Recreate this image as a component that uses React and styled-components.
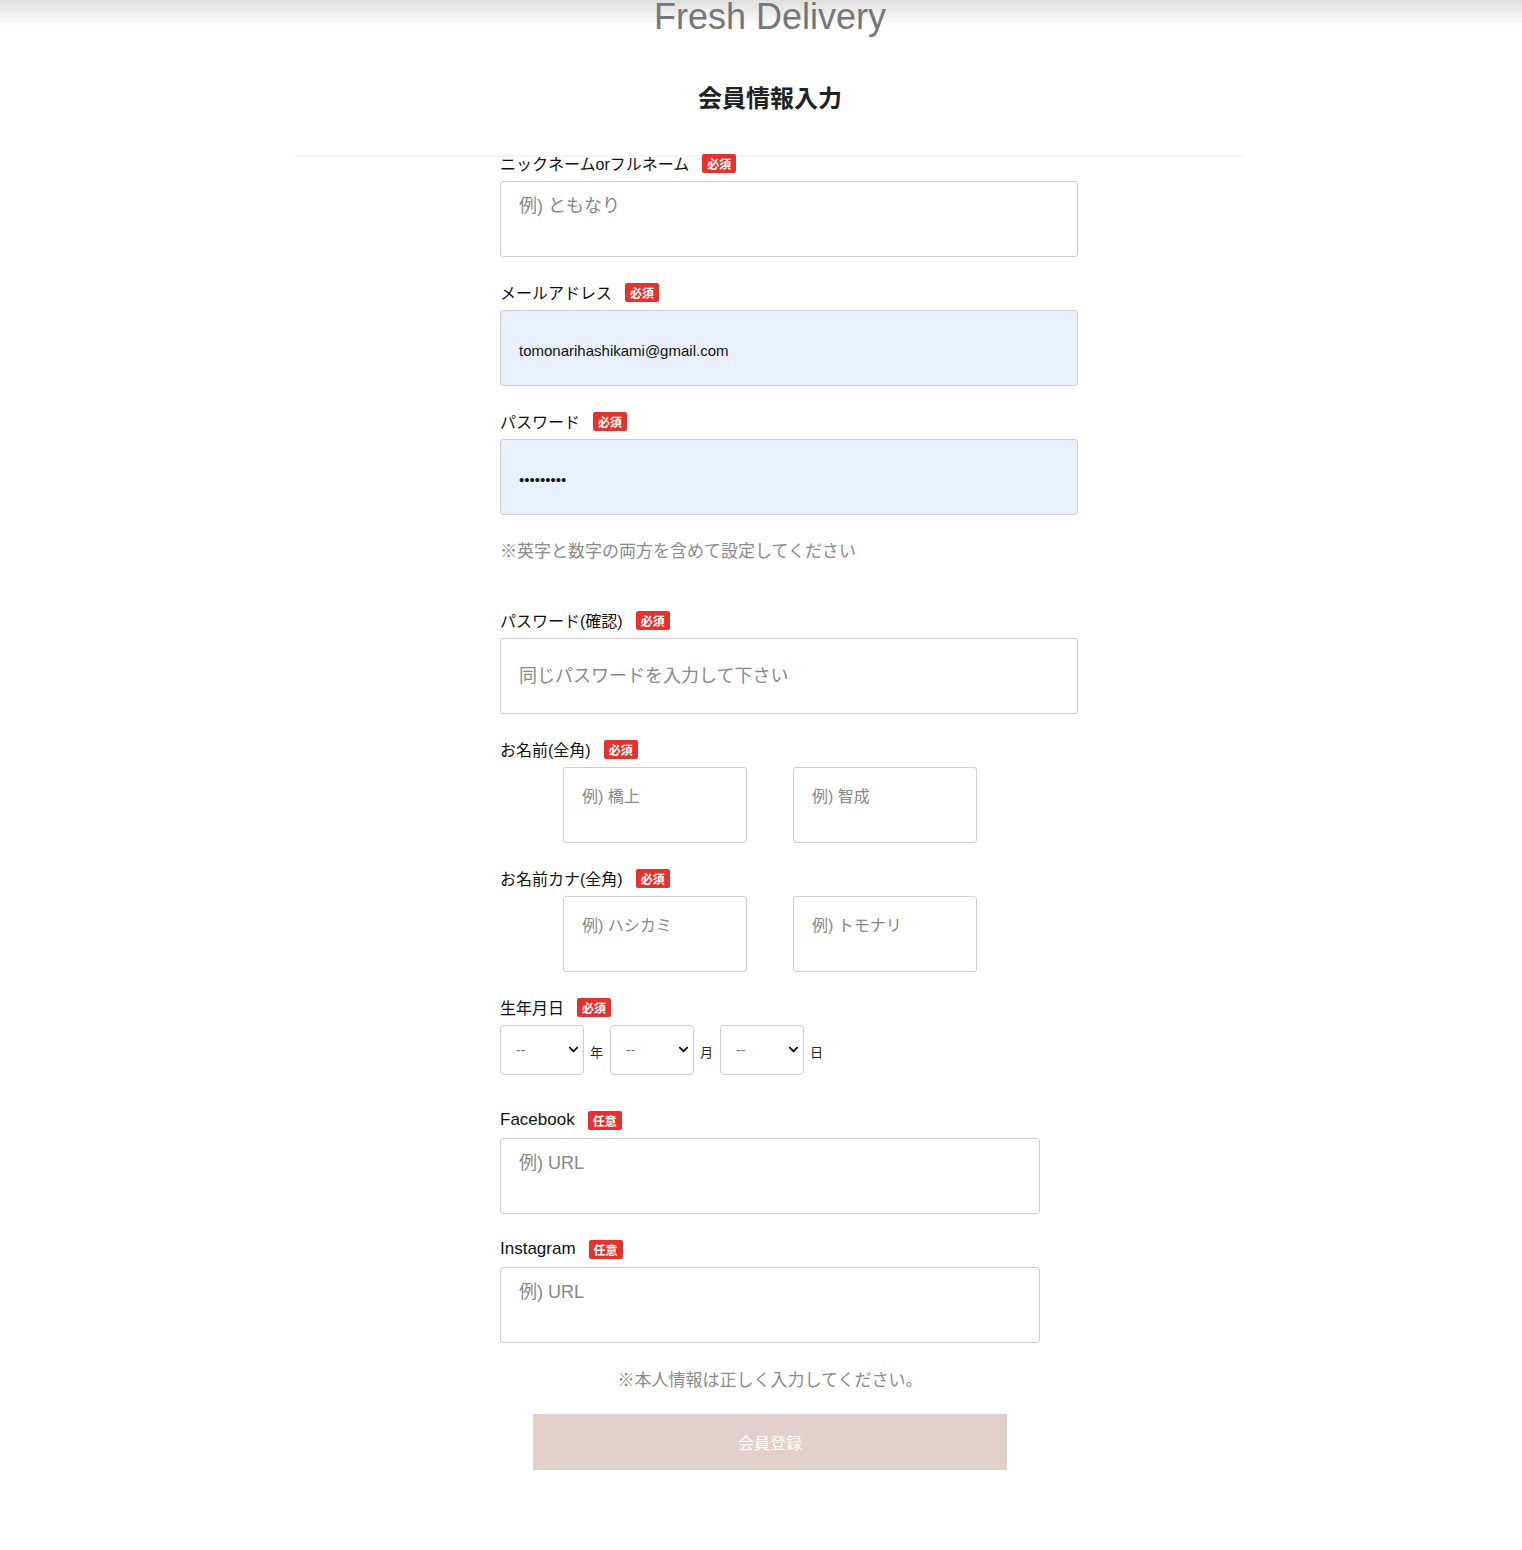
import styled, { createGlobalStyle } from "styled-components";
import { FaChevronDown } from "react-icons/fa";

const GlobalStyle = createGlobalStyle`
  body {
    margin: 0;
    background: #fff;
    font-family: "Liberation Sans", "Noto Sans CJK JP", sans-serif;
    color: #222;
  }
`;

const Page = styled.div`
  padding-left: 18px;
  min-height: 1550px;
  box-sizing: border-box;
  background: linear-gradient(#dedede 0px, #fff 26px) no-repeat;
  background-size: 100% 26px;
`;

const Header = styled.header`
  height: 37px;
  display: flex;
  justify-content: center;
  overflow: hidden;
`;

const Logo = styled.h1`
  margin: -3px 0 0;
  font-family: "Liberation Sans", sans-serif;
  font-size: 36px;
  line-height: 40px;
  font-weight: normal;
  color: #777;
`;

const Title = styled.h2`
  margin: 45px 0 0;
  text-align: center;
  font-family: "Noto Sans CJK JP", sans-serif;
  font-size: 24px;
  line-height: 30px;
  font-weight: 700;
  color: #222;
`;

const Section = styled.section`
  width: 950px;
  margin: 43px auto 0;
  border-top: 2px solid #f6f6f6;
`;

const Form = styled.form`
  padding-left: 205px;
`;

const Field = styled.div`
  margin-bottom: ${({ gap }) => gap ?? 29}px;
`;

const LabelRow = styled.div`
  height: 16px;
  display: flex;
  align-items: center;
  gap: 13px;
  margin: -2px 0 10px;
`;

const Label = styled.label`
  font-family: "Liberation Sans", "Noto Sans CJK JP", sans-serif;
  font-size: ${({ latin }) => (latin ? 17 : 16)}px;
  color: #111;
  white-space: nowrap;
`;

const Badge = styled.span`
  display: inline-flex;
  align-items: center;
  justify-content: center;
  width: 34px;
  height: 19px;
  border-radius: 2px;
  background: #e5322d;
  color: #fff;
  font-family: "Noto Sans CJK JP", sans-serif;
  font-size: 12px;
  font-weight: 700;
`;

const Input = styled.input`
  display: block;
  box-sizing: border-box;
  width: ${({ w }) => w ?? 578}px;
  height: 76px;
  margin: 0;
  border: 1px solid #cfcfcf;
  border-radius: 3px;
  padding: ${({ top, small, filled }) =>
    small
      ? "0 18px 16px"
      : top
      ? "0 18px 26px"
      : filled
      ? "5px 18px 0"
      : "0 18px"};
  background: ${({ filled }) => (filled ? "#e8f0fe" : "#fff")};
  font-family: ${({ filled }) =>
    filled
      ? `"Liberation Sans", sans-serif`
      : `"Liberation Sans", "Noto Sans CJK JP", sans-serif`};
  font-size: ${({ filled, small }) => (filled ? 15 : small ? 16 : 18)}px;
  color: #111;
  outline: none;
  &::placeholder {
    color: #888;
  }
`;

const Note = styled.p`
  margin: ${({ m }) => m};
  font-family: "Noto Sans CJK JP", sans-serif;
  font-size: 17px;
  line-height: 20px;
  color: #8a8a8a;
  text-align: ${({ center }) => (center ? "center" : "left")};
`;

const PairRow = styled.div`
  display: flex;
  gap: 46px;
  padding-left: 63px;
`;

const DateRow = styled.div`
  display: flex;
  align-items: center;
`;

const SelectWrap = styled.div`
  position: relative;
  width: 84px;
  height: 50px;
`;

const Select = styled.select`
  appearance: none;
  box-sizing: border-box;
  width: 100%;
  height: 100%;
  margin: 0;
  border: 1px solid #cfcfcf;
  border-radius: 4px;
  padding: 0 0 0 15px;
  background: #fff;
  font-family: "Liberation Sans", sans-serif;
  font-size: 14px;
  color: #777;
`;

const Chevron = styled.span`
  position: absolute;
  right: 5px;
  top: 19px;
  display: flex;
  pointer-events: none;
  color: #111;
`;

const Unit = styled.span`
  margin: 2px 7px 0 6px;
  font-family: "Noto Sans CJK JP", sans-serif;
  font-size: 13px;
  color: #222;
`;

const Center = styled.div`
  width: 950px;
  margin: 0 auto;
`;

const Submit = styled.button`
  display: block;
  width: 474px;
  height: 56px;
  margin: 25px auto 0;
  border: none;
  background: #e2d0cd;
  color: #fff;
  font-family: "Noto Sans CJK JP", sans-serif;
  font-size: 16px;
`;

const DateSelect = ({ unit }) => (
  <>
    <SelectWrap>
      <Select defaultValue="">
        <option value="">--</option>
      </Select>
      <Chevron>
        <FaChevronDown size={11} />
      </Chevron>
    </SelectWrap>
    <Unit>{unit}</Unit>
  </>
);

const Head = ({ label, badge = "必須", latin }) => (
  <LabelRow>
    <Label latin={latin}>{label}</Label>
    <Badge>{badge}</Badge>
  </LabelRow>
);

const App = () => {
  return (
    <Page>
      <GlobalStyle />
      <Header>
        <Logo>Fresh Delivery</Logo>
      </Header>
      <Title>会員情報入力</Title>
      <Section>
        <Form>
          <Field>
            <Head label="ニックネームorフルネーム" />
            <Input top placeholder="例) ともなり" />
          </Field>
          <Field>
            <Head label="メールアドレス" />
            <Input filled defaultValue="tomonarihashikami@gmail.com" />
          </Field>
          <Field gap={0}>
            <Head label="パスワード" />
            <Input filled type="password" defaultValue="password1" />
          </Field>
          <Note m="25px 0 54px">※英字と数字の両方を含めて設定してください</Note>
          <Field>
            <Head label="パスワード(確認)" />
            <Input type="password" placeholder="同じパスワードを入力して下さい" />
          </Field>
          <Field>
            <Head label="お名前(全角)" />
            <PairRow>
              <Input small w={184} placeholder="例) 橋上" />
              <Input small w={184} placeholder="例) 智成" />
            </PairRow>
          </Field>
          <Field>
            <Head label="お名前カナ(全角)" />
            <PairRow>
              <Input small w={184} placeholder="例) ハシカミ" />
              <Input small w={184} placeholder="例) トモナリ" />
            </PairRow>
          </Field>
          <Field gap={39}>
            <Head label="生年月日" />
            <DateRow>
              <DateSelect unit="年" />
              <DateSelect unit="月" />
              <DateSelect unit="日" />
            </DateRow>
          </Field>
          <Field>
            <Head label="Facebook" badge="任意" latin />
            <Input top w={540} placeholder="例) URL" />
          </Field>
          <Field gap={0}>
            <Head label="Instagram" badge="任意" latin />
            <Input top w={540} placeholder="例) URL" />
          </Field>
        </Form>
        <Center>
          <Note center m="26px 0 0">
            ※本人情報は正しく入力してください。
          </Note>
          <Submit type="button">会員登録</Submit>
        </Center>
      </Section>
    </Page>
  );
};

export default App;
